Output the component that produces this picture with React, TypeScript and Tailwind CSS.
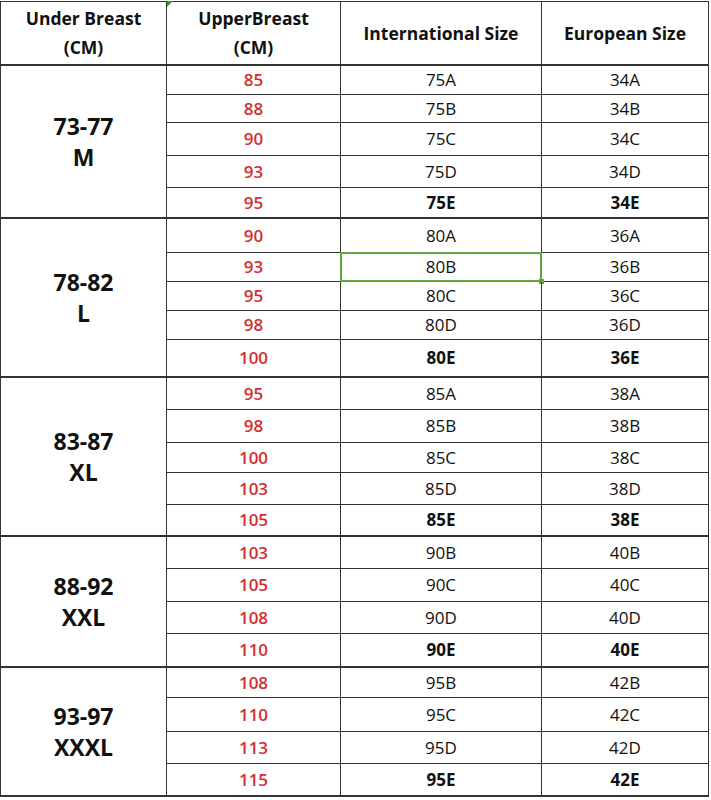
import React from "react";

type Row = { up: string; intl: string; eu: string; h: string };
type Group = { range: string; size: string; rows: Row[] };

const groups: Group[] = [
	{
		range: "73-77",
		size: "M",
		rows: [
			{ up: "85", intl: "75A", eu: "34A", h: "h-[29px]" },
			{ up: "88", intl: "75B", eu: "34B", h: "h-[28px]" },
			{ up: "90", intl: "75C", eu: "34C", h: "h-[33px]" },
			{ up: "93", intl: "75D", eu: "34D", h: "h-[32px]" },
			{ up: "95", intl: "75E", eu: "34E", h: "h-[29px]" },
		],
	},
	{
		range: "78-82",
		size: "L",
		rows: [
			{ up: "90", intl: "80A", eu: "36A", h: "h-[34px]" },
			{ up: "93", intl: "80B", eu: "36B", h: "h-[29px]" },
			{ up: "95", intl: "80C", eu: "36C", h: "h-[29px]" },
			{ up: "98", intl: "80D", eu: "36D", h: "h-[29px]" },
			{ up: "100", intl: "80E", eu: "36E", h: "h-[36px]" },
		],
	},
	{
		range: "83-87",
		size: "XL",
		rows: [
			{ up: "95", intl: "85A", eu: "38A", h: "h-[32px]" },
			{ up: "98", intl: "85B", eu: "38B", h: "h-[33px]" },
			{ up: "100", intl: "85C", eu: "38C", h: "h-[30px]" },
			{ up: "103", intl: "85D", eu: "38D", h: "h-[32px]" },
			{ up: "105", intl: "85E", eu: "38E", h: "h-[30px]" },
		],
	},
	{
		range: "88-92",
		size: "XXL",
		rows: [
			{ up: "103", intl: "90B", eu: "40B", h: "h-[32px]" },
			{ up: "105", intl: "90C", eu: "40C", h: "h-[33px]" },
			{ up: "108", intl: "90D", eu: "40D", h: "h-[32px]" },
			{ up: "110", intl: "90E", eu: "40E", h: "h-[32px]" },
		],
	},
	{
		range: "93-97",
		size: "XXXL",
		rows: [
			{ up: "108", intl: "95B", eu: "42B", h: "h-[30px]" },
			{ up: "110", intl: "95C", eu: "42C", h: "h-[34px]" },
			{ up: "113", intl: "95D", eu: "42D", h: "h-[32px]" },
			{ up: "115", intl: "95E", eu: "42E", h: "h-[31px]" },
		],
	},
];

export default function App() {
	return (
		<div
			className="w-[711px] h-[800px] bg-white text-[#111]"
			style={{ fontFamily: "'Open Sans', 'Noto Sans', sans-serif" }}
		>
			<div className="relative w-[709px] border-l border-t border-[#333] mt-px">
				{/* little comment marker */}
				<div className="absolute left-[166px] -top-px w-0 h-0 border-l-[6px] border-l-[#3a9a2a] border-b-[6px] border-b-transparent" />
				<div className="flex h-[64px] border-b-2 border-[#333] font-bold text-[17.5px] leading-[29px]">
					<div className="w-[166px] border-r border-[#333] flex flex-col items-center justify-center">
						<span>Under Breast</span>
						<span>(CM)</span>
					</div>
					<div className="w-[174px] border-r border-[#333] flex flex-col items-center justify-center">
						<span>UpperBreast</span>
						<span>(CM)</span>
					</div>
					<div className="w-[201px] border-r border-[#333] flex items-center justify-center">
						International Size
					</div>
					<div className="w-[167px] border-r border-[#333] flex items-center justify-center">
						European Size
					</div>
				</div>
				{groups.map((g) => (
					<div key={g.range} className="flex border-b-2 border-[#333]">
						<div className="w-[166px] border-r border-[#333] flex flex-col items-center justify-center font-bold text-[23px] leading-[31px]">
							<span>{g.range}</span>
							<span>{g.size}</span>
						</div>
						<div className="flex flex-col">
							{g.rows.map((r, i) => {
								const last = i === g.rows.length - 1;
								return (
									<div
										key={r.intl}
										className={
											"flex text-[17px] box-border " +
											r.h +
											(last ? " font-bold" : " font-medium border-b border-[#333]")
										}
									>
										<div className="w-[174px] border-r border-[#333] flex items-center justify-center text-[#d32f2f] font-semibold">
											{r.up}
										</div>
										<div className="relative w-[201px] border-r border-[#333] flex items-center justify-center">
											{r.intl}
											{r.intl === "80B" && (
												<div className="absolute -left-px -top-px -right-px -bottom-px border-2 border-[#5fa83e]">
													<div className="absolute -right-[4px] -bottom-[4px] w-[5px] h-[5px] bg-[#5fa83e]" />
												</div>
											)}
										</div>
										<div className="w-[167px] border-r border-[#333] flex items-center justify-center">
											{r.eu}
										</div>
									</div>
								);
							})}
						</div>
					</div>
				))}
			</div>
		</div>
	);
}
